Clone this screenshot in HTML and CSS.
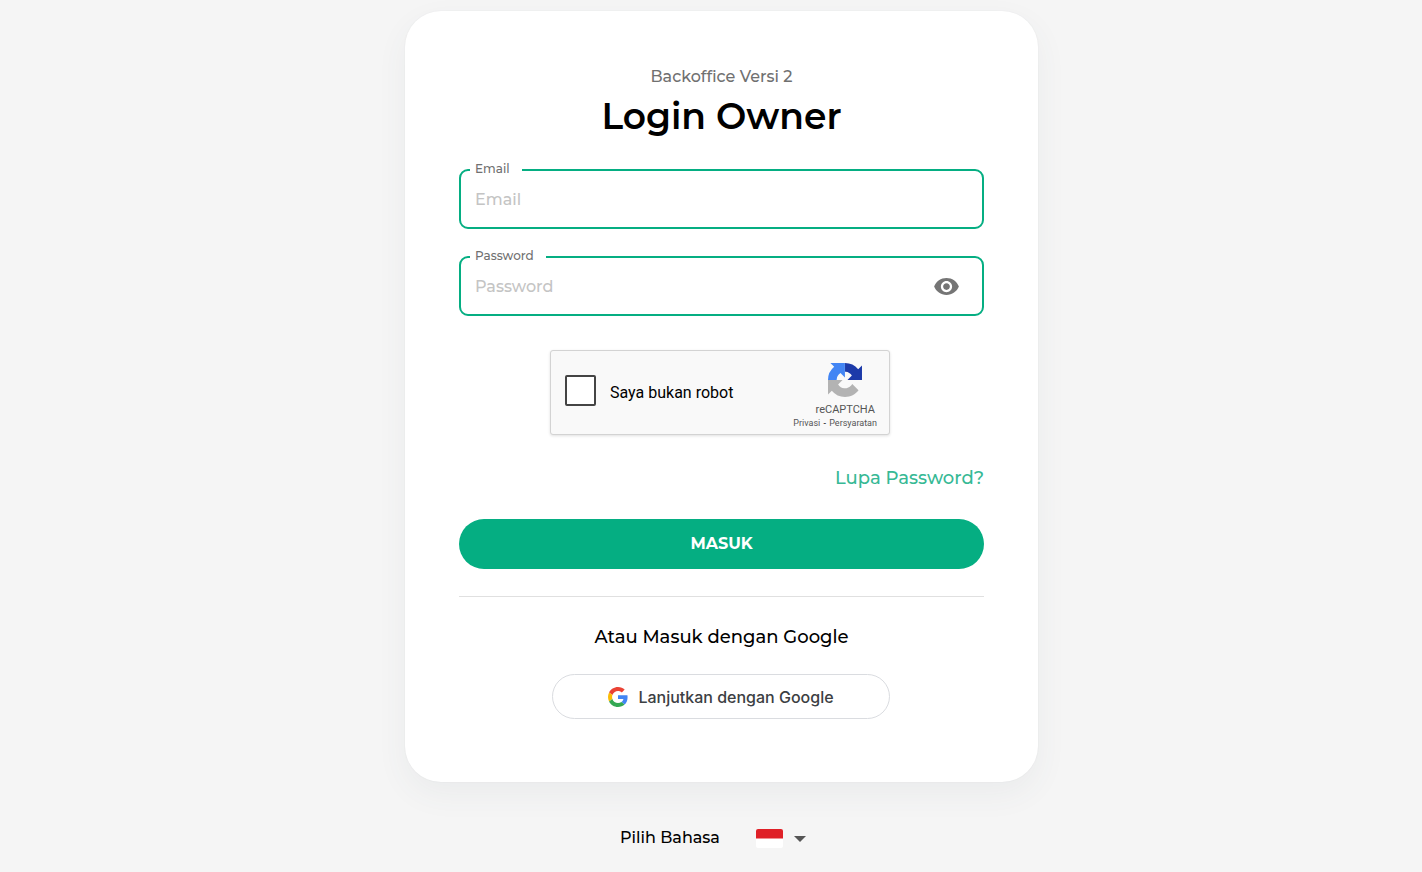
FILE: index.html
```html
<!DOCTYPE html>
<html lang="id">
<head>
<meta charset="utf-8">
<meta name="viewport" content="width=device-width, initial-scale=1">
<title>Login Owner</title>
<link rel="stylesheet" href="styles.css">
</head>
<body>
<main class="page">
  <form class="card">
    <p class="subtitle">Backoffice Versi 2</p>
    <h1 class="title">Login Owner</h1>

    <fieldset class="field">
      <legend class="field-legend"><label for="email">Email</label></legend>
      <input class="field-input" id="email" type="email" placeholder="Email">
    </fieldset>

    <fieldset class="field">
      <legend class="field-legend"><label for="password">Password</label></legend>
      <input class="field-input" id="password" type="password" placeholder="Password">
      <button class="reveal" type="button" aria-label="Tampilkan password">
        <svg width="27" height="27" viewBox="0 0 24 24" fill="#757575"><path d="M12 4.500C7 4.500 2.730 7.610 1 12c1.730 4.390 6 7.500 11 7.500s9.270-3.110 11-7.500c-1.730-4.390-6-7.500-11-7.500zM12 17c-2.760 0-5-2.240-5-5s2.240-5 5-5 5 2.240 5 5-2.240 5-5 5zm0-8c-1.660 0-3 1.340-3 3s1.340 3 3 3 3-1.340 3-3-1.340-3-3-3z"/></svg>
      </button>
    </fieldset>

    <div class="captcha">
      <input class="captcha-box" id="robot" type="checkbox">
      <label class="captcha-label" for="robot">Saya bukan robot</label>
      <div class="captcha-brand">
        <svg class="captcha-logo" width="34" height="34" viewBox="0 0 64 64">
          <path fill="#1c3aa9" d="M64 31.960a36 36 0 0 0-.030-1.370V4.590l-7.190 7.190A31.900 31.900 0 0 0 32.040 0v16.310c.480 0 .850.050 1.130.160a15.600 15.600 0 0 1 11.780 7.150l-8.340 8.340H64"/>
          <path fill="#4285f4" d="M31.860 0a36 36 0 0 0-1.370.030H4.490l7.190 7.190A31.900 31.900 0 0 0 0 31.960h16.210c0-.480.050-.850.160-1.130a15.600 15.600 0 0 1 7.150-11.780l8.340 8.340V0"/>
          <path fill="#b3b3b3" d="M0 31.960c0 .460.010.920.030 1.370v26.080l7.190-7.190A31.900 31.900 0 0 0 31.960 64c10.410 0 19.660-4.970 25.510-12.670L45.690 39.430a15.600 15.600 0 0 1-4.770 5.350c-2.060 1.600-4.970 2.910-8.960 2.910-.480 0-.850-.050-1.130-.160a15.600 15.600 0 0 1-11.780-7.150l8.340-8.340H0"/>
        </svg>
        <span class="captcha-name">reCAPTCHA</span>
        <span class="captcha-links"><a href="#privasi">Privasi</a> <span class="captcha-dash">-</span> <a href="#persyaratan">Persyaratan</a></span>
      </div>
    </div>

    <a class="forgot" href="#lupa-password">Lupa Password?</a>
    <button class="submit" type="submit">MASUK</button>
    <hr class="rule">
    <p class="alternative">Atau Masuk dengan Google</p>
    <button class="google" type="button">
      <svg width="20" height="20" viewBox="0 0 48 48">
        <path fill="#EA4335" d="M24 9.500c3.540 0 6.710 1.220 9.210 3.600l6.850-6.850C35.900 2.380 30.470 0 24 0 14.620 0 6.510 5.380 2.560 13.220l7.980 6.190C12.430 13.720 17.740 9.500 24 9.500z"/>
        <path fill="#4285F4" d="M46.980 24.550c0-1.570-.150-3.090-.380-4.550H24v9.020h12.940c-.580 2.960-2.260 5.480-4.780 7.180l7.730 6c4.510-4.180 7.090-10.360 7.090-17.650z"/>
        <path fill="#FBBC05" d="M10.530 28.590c-.480-1.450-.760-2.990-.760-4.590s.270-3.140.760-4.590l-7.980-6.190C.920 16.460 0 20.120 0 24c0 3.880.920 7.540 2.560 10.780l7.970-6.190z"/>
        <path fill="#34A853" d="M24 48c6.480 0 11.930-2.130 15.890-5.810l-7.730-6c-2.150 1.450-4.920 2.300-8.160 2.300-6.260 0-11.570-4.220-13.470-9.910l-7.980 6.190C6.510 42.620 14.620 48 24 48z"/>
      </svg>
      Lanjutkan dengan Google
    </button>
  </form>

  <div class="language">
    <label for="language">Pilih Bahasa</label>
    <div class="language-picker">
      <svg width="27" height="19" viewBox="0 0 27 19"><rect width="27" height="19" rx="2" fill="#fff"/><path d="M0 9.500V2a2 2 0 0 1 2-2h23a2 2 0 0 1 2 2v7.500z" fill="#df2027"/></svg>
      <svg width="12" height="8" viewBox="0 0 12 8"><path d="M0 2h12L6 8z" fill="#555"/></svg>
      <select class="language-select" id="language">
        <option value="id" aria-label="Bahasa Indonesia"></option>
        <option value="en" aria-label="English"></option>
      </select>
    </div>
  </div>
</main>
</body>
</html>
```
FILE: styles.css
```css
* {
  box-sizing: border-box;
}

body {
  margin: 0;
  background: #f5f5f5;
  color: #000;
  font-family: Montserrat, Inter, sans-serif;
  font-size: 16px;
  font-weight: 500;
}

p,
h1 {
  margin: 0;
  text-align: center;
}

button,
input {
  font-family: inherit;
  font-weight: inherit;
}

svg {
  display: block;
}

.page {
  display: flex;
  flex-direction: column;
  align-items: center;
  padding: 11px 0 22px 21px;
}

.card {
  display: flex;
  flex-direction: column;
  width: 100%;
  max-width: 633px;
  padding: 54px 54px 63px;
  border-radius: 36px;
  background: #fff;
  box-shadow: 0 12px 32px rgba(60, 80, 100, 0.06), 0 0 2px rgba(0, 0, 0, 0.06);
}

.subtitle {
  color: #707070;
  line-height: 24px;
}

.title {
  margin-bottom: 19px;
  font-size: 36px;
  font-weight: 600;
  line-height: 55px;
}

.field {
  display: flex;
  align-items: center;
  min-width: 0;
  margin: 0 0 21px;
  padding: 0 9px 2px 14px;
  border: 2px solid #05ae82;
  border-radius: 9px;
}

.field-legend {
  margin-left: -5px;
  padding: 0 12px 2px 5px;
  color: #707070;
  font-size: 12px;
  line-height: 12px;
}

.field-input {
  flex: 1;
  min-width: 0;
  height: 48px;
  padding: 0 0 3px;
  border: 0;
  outline: 0;
  background: none;
  font-size: 16px;
}

.field-input::placeholder {
  color: #c4c4c4;
}

.reveal {
  padding: 0 13px 3px 14px;
  border: 0;
  background: none;
  cursor: pointer;
}

.captcha {
  display: flex;
  align-items: center;
  align-self: center;
  width: 100%;
  max-width: 340px;
  margin: 13px 3px 28px 0;
  padding: 12px 12px 5px 14px;
  border: 1px solid #d3d3d3;
  border-radius: 3px;
  background: #f9f9f9;
  box-shadow: 0 1px 3px rgba(0, 0, 0, 0.12);
  font-family: Roboto, sans-serif;
  font-weight: 400;
}

.captcha-box {
  appearance: none;
  width: 31px;
  height: 31px;
  margin: 0 14px 11px 0;
  border: 2px solid #444;
  border-radius: 2px;
  background: #fff;
}

.captcha-label {
  flex: 1;
  margin-bottom: 7px;
  font-size: 16px;
}

.captcha-brand {
  display: flex;
  flex-direction: column;
  align-items: flex-end;
  color: #555;
}

.captcha-logo {
  margin-right: 15px;
}

.captcha-name {
  margin: 5px 2px 0 0;
  font-size: 11px;
  line-height: 15px;
}

.captcha-links {
  font-size: 9px;
  line-height: 12px;
}

.captcha-links a {
  color: inherit;
  text-decoration: none;
}

.captcha-dash {
  padding: 0 1px;
  color: #000;
}

.forgot {
  align-self: flex-end;
  margin-bottom: 26px;
  color: #37b995;
  font-size: 18px;
  line-height: 30px;
  text-decoration: none;
}

.submit {
  height: 50px;
  padding: 0 0 1px;
  border: 0;
  border-radius: 25px;
  background: #05ae82;
  color: #fff;
  font-size: 16px;
  font-weight: 700;
}

.rule {
  width: 100%;
  margin: 27px 0;
  border: 0;
  border-top: 1px solid #e0e0e0;
}

.alternative {
  margin-bottom: 24px;
  font-size: 18px;
  line-height: 26px;
}

.google {
  display: flex;
  align-items: center;
  align-self: center;
  justify-content: center;
  gap: 10px;
  width: 100%;
  max-width: 338px;
  height: 45px;
  margin-right: 1px;
  border: 1px solid #dadce0;
  border-radius: 23px;
  background: #fff;
  color: #3c4043;
  font-family: Inter, sans-serif;
  font-size: 16px;
}

.language {
  display: flex;
  align-items: center;
  gap: 36px;
  margin: 44px 17px 0 0;
  line-height: 24px;
}

.language-picker {
  display: flex;
  position: relative;
  align-items: center;
  gap: 11px;
}

.language-select {
  position: absolute;
  inset: 0;
  appearance: none;
  border: 0;
  background: none;
  cursor: pointer;
}
```
